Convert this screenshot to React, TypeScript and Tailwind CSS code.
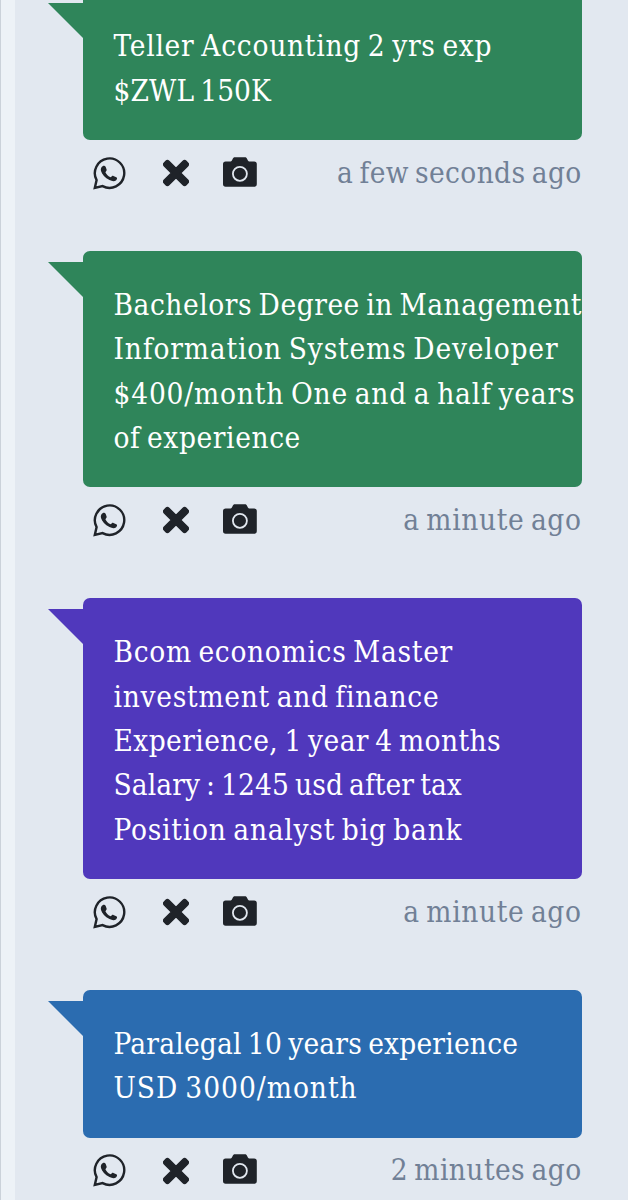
import { FaTimes } from 'react-icons/fa';

type Post = {
  color: string;
  tail: string;
  lines: { text: string; tracking: string }[];
  time: string;
  timeTracking: string;
};

const posts: Post[] = [
  {
    color: 'bg-[#2f855a]',
    tail: 'border-t-[#2f855a]',
    lines: [
      { text: 'Teller Accounting 2 yrs exp', tracking: 'tracking-[0.76px]' },
      { text: '$ZWL 150K', tracking: 'tracking-[0.1px]' },
    ],
    time: 'a few seconds ago',
    timeTracking: 'tracking-[0.36px]',
  },
  {
    color: 'bg-[#2f855a]',
    tail: 'border-t-[#2f855a]',
    lines: [
      { text: 'Bachelors Degree in Management', tracking: 'tracking-[0.54px]' },
      { text: 'Information Systems Developer', tracking: 'tracking-[0.84px]' },
      { text: '$400/month One and a half years', tracking: 'tracking-[0.82px]' },
      { text: 'of experience', tracking: 'tracking-[0.6px]' },
    ],
    time: 'a minute ago',
    timeTracking: 'tracking-[0.63px]',
  },
  {
    color: 'bg-[#5038bc]',
    tail: 'border-t-[#5038bc]',
    lines: [
      { text: 'Bcom economics Master', tracking: 'tracking-[0.7px]' },
      { text: 'investment and finance', tracking: 'tracking-[0.73px]' },
      { text: 'Experience, 1 year 4 months', tracking: 'tracking-[0.42px]' },
      { text: 'Salary : 1245 usd after tax', tracking: 'tracking-[0.09px]' },
      { text: 'Position analyst big bank', tracking: 'tracking-[0.77px]' },
    ],
    time: 'a minute ago',
    timeTracking: 'tracking-[0.63px]',
  },
  {
    color: 'bg-[#2b6cb0]',
    tail: 'border-t-[#2b6cb0]',
    lines: [
      { text: 'Paralegal 10 years experience', tracking: 'tracking-[0.21px]' },
      { text: 'USD 3000/month', tracking: 'tracking-[1px]' },
    ],
    time: '2 minutes ago',
    timeTracking: 'tracking-[0.43px]',
  },
];

function WhatsappIcon() {
  return (
    <svg className="size-[33px]" viewBox="0 0 33 33" fill="none">
      <path
        d="M9.6 29.1A14.7 14.7 0 1 0 3.6 23.1L1.8 30.9Z"
        stroke="currentColor"
        strokeWidth="2.4"
      />
      <path
        d="M9.6 9.2C11 8.3 12.1 8.7 12.7 10L13.6 12.4C13.9 13.3 13.2 14.2 12.4 15.2C13.4 17.3 15.2 19.2 17.8 20.3C18.7 19.3 19.4 18.5 20.4 18.9L23.3 20.3C24.4 20.9 24.3 22.2 23.2 23.2C21.6 24.5 19.3 24.4 16.5 23.1C12 21 9 17.3 8 14C7.5 12 8.1 10.1 9.6 9.2Z"
        fill="currentColor"
      />
    </svg>
  );
}

function CameraIcon() {
  return (
    <svg className="h-[30px] w-[34px]" viewBox="0 0 34 30" fill="currentColor">
      <path d="M2.6 4.4H7.6C8.6 4.4 8.9 3.8 9.4 2.6C10 .8 10.8.3 12 .3H21.8C23 .3 23.8.8 24.4 2.6C24.9 3.8 25.2 4.4 26.2 4.4H31.2A2.6 2.6 0 0 1 33.8 7V27.1A2.6 2.6 0 0 1 31.2 29.7H2.6A2.6 2.6 0 0 1 0 27.1V7A2.6 2.6 0 0 1 2.6 4.4Z" />
      <circle cx="16.9" cy="16.8" r="7" stroke="#e2e8f0" strokeWidth="1.8" />
    </svg>
  );
}

function PostCard({ post }: { post: Post }) {
  return (
    <article className="mb-[44.7px]">
      <div className={`relative rounded-[7px] pt-[32px] pb-[27px] pl-[30.5px] ${post.color}`}>
        <div
          className={`absolute top-[11px] -left-[35px] border-t-[35px] border-l-[35px] border-l-transparent ${post.tail}`}
        />
        {post.lines.map((line) => (
          <p key={line.text} className={`h-[44.4px] leading-[44.4px] whitespace-nowrap text-white ${line.tracking}`}>
            {line.text}
          </p>
        ))}
      </div>
      <div className="flex h-[66px] items-center pl-[10px] text-[#1f2329]">
        <WhatsappIcon />
        <FaTimes className="ml-[36.6px] h-[36px] w-[26px]" strokeWidth="18" />
        <div className="mb-[3px] ml-[34.6px]">
          <CameraIcon />
        </div>
        <time className={`mr-[0.5px] ml-auto whitespace-nowrap text-[#718096] ${post.timeTracking}`}>{post.time}</time>
      </div>
    </article>
  );
}

export default function App() {
  return (
    <div className="flex h-[1200px] w-[628px] overflow-hidden bg-[#e2e8f0] font-['DejaVu_Serif_Condensed','DejaVu_Serif',serif] text-[29.5px] [word-spacing:-2.5px]">
      <div className="w-[15px] shrink-0 border-l border-[#cbd2da] bg-[#edf2f7]" />
      <main className="-mt-[7.6px] mr-[46px] ml-[68px] flex-1">
        {posts.map((post) => (
          <PostCard key={post.lines[0].text} post={post} />
        ))}
      </main>
    </div>
  );
}
